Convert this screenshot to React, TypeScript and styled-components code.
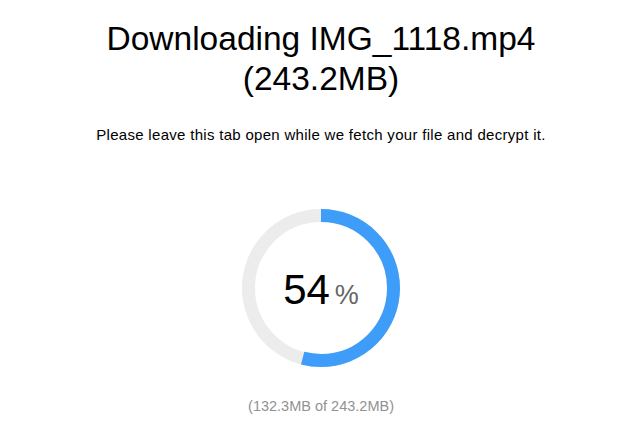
import React from 'react';
import styled, { createGlobalStyle } from 'styled-components';

const GlobalStyle = createGlobalStyle`
  html, body {
    margin: 0;
    padding: 0;
    background: #fff;
  }
  body {
    font-family: "Liberation Sans", Arial, sans-serif;
    color: #000;
  }
`;

const TOTAL = 243.2;
const DONE = 132.3;
const PERCENT = 54;
const SIZE = 158;
const STROKE = 13;

function ProgressRing({ percent }: { percent: number }): JSX.Element {
  const r = (SIZE - STROKE) / 2;
  const c = 2 * Math.PI * r;
  return (
    <RingWrap>
      <svg width={SIZE} height={SIZE} viewBox={`0 0 ${SIZE} ${SIZE}`}>
        <circle cx={SIZE / 2} cy={SIZE / 2} r={r} fill="none" stroke="#ececec" strokeWidth={STROKE} />
        <circle
          cx={SIZE / 2}
          cy={SIZE / 2}
          r={r}
          fill="none"
          stroke="#3d9df8"
          strokeWidth={STROKE}
          strokeDasharray={`${(c * percent) / 100} ${c}`}
          transform={`rotate(-90 ${SIZE / 2} ${SIZE / 2})`}
        />
      </svg>
      <RingLabel>
        <Value>
          <Number>{percent}</Number>
          <Percent>%</Percent>
        </Value>
      </RingLabel>
    </RingWrap>
  );
}

export default function App(): JSX.Element {
  return (
    <>
      <GlobalStyle />
      <Page>
        <Title>
          Downloading IMG_1118.mp4
          <br />
          ({TOTAL}MB)
        </Title>
        <Note>Please leave this tab open while we fetch your file and decrypt it.</Note>
        <ProgressRing percent={PERCENT} />
        <Amount>
          ({DONE}MB of {TOTAL}MB)
        </Amount>
      </Page>
    </>
  );
}

const Page = styled.div`
  width: 636px;
  height: 445px;
  display: flex;
  flex-direction: column;
  align-items: center;
  padding: 19px 0 0 6px;
  box-sizing: border-box;
`;

const Title = styled.h1`
  margin: 0;
  font-size: 33.5px;
  line-height: 40px;
  font-weight: 400;
  text-align: center;
`;

const Note = styled.p`
  margin: 27px 0 0;
  font-size: 15px;
  line-height: 18px;
  letter-spacing: 0.3px;
`;

const RingWrap = styled.div`
  position: relative;
  margin-top: 65px;
  width: ${SIZE}px;
  height: ${SIZE}px;
  svg {
    display: block;
  }
`;

const RingLabel = styled.div`
  position: absolute;
  inset: 0;
  display: flex;
  align-items: center;
  justify-content: center;
  padding-top: 4px;
`;

const Value = styled.div`
  display: flex;
  align-items: baseline;
`;

const Number = styled.span`
  font-size: 42px;
  line-height: 1;
`;

const Percent = styled.span`
  font-size: 27px;
  line-height: 1;
  color: #666;
  margin-left: 5px;
`;

const Amount = styled.div`
  margin-top: 30px;
  font-size: 14.5px;
  line-height: 18px;
  color: #929292;
`;
